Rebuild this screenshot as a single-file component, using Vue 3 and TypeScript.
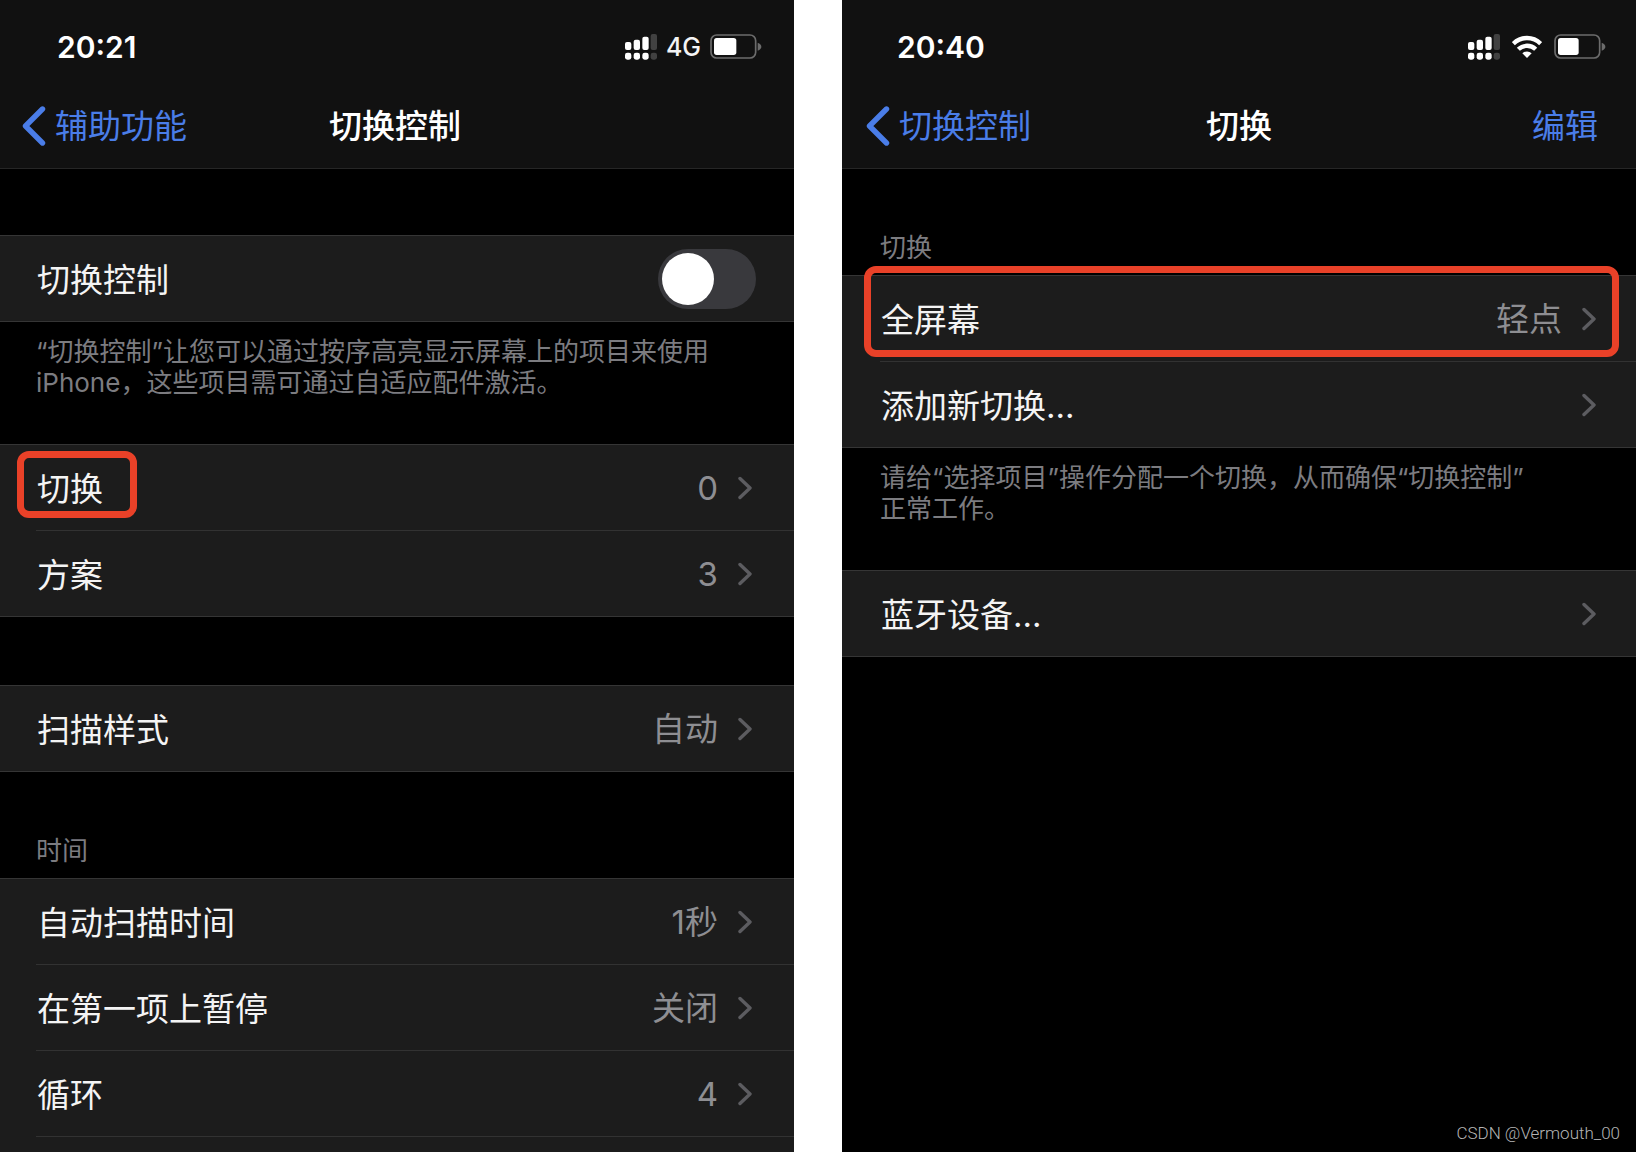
<script setup lang="ts">
import { ref } from 'vue'

interface Row {
  label: string
  value?: string
  toggle?: boolean
  mark?: 'label' | 'row'
}

interface Group {
  heading?: string
  rows: Row[]
  note?: string
  continues?: boolean
}

interface Screen {
  id: string
  time: string
  network: '4G' | 'wifi'
  charge: number
  back: string
  title: string
  action?: string
  groups: Group[]
}

const switchControl = ref(false)

const screens: Screen[] = [
  {
    id: 'control',
    time: '20:21',
    network: '4G',
    charge: 67,
    back: '辅助功能',
    title: '切换控制',
    groups: [
      {
        rows: [{ label: '切换控制', toggle: true }],
        note: '“切换控制”让您可以通过按序高亮显示屏幕上的项目来使用\niPhone，这些项目需可通过自适应配件激活。',
      },
      {
        rows: [
          { label: '切换', value: '0', mark: 'label' },
          { label: '方案', value: '3' },
        ],
      },
      { rows: [{ label: '扫描样式', value: '自动' }] },
      {
        heading: '时间',
        continues: true,
        rows: [
          { label: '自动扫描时间', value: '1秒' },
          { label: '在第一项上暂停', value: '关闭' },
          { label: '循环', value: '4' },
        ],
      },
    ],
  },
  {
    id: 'switches',
    time: '20:40',
    network: 'wifi',
    charge: 62,
    back: '切换控制',
    title: '切换',
    action: '编辑',
    groups: [
      {
        heading: '切换',
        rows: [{ label: '全屏幕', value: '轻点', mark: 'row' }, { label: '添加新切换…' }],
        note: '请给“选择项目”操作分配一个切换，从而确保“切换控制”\n正常工作。',
      },
      { rows: [{ label: '蓝牙设备…' }] },
    ],
  },
]
</script>

<template>
  <main class="page">
    <section v-for="s in screens" :key="s.id" class="phone" :class="s.id">
      <header class="header">
        <div class="status">
          <span class="time">{{ s.time }}</span>
          <div class="indicators">
            <svg class="signal" viewBox="0 0 96 78" aria-hidden="true">
              <g fill="#fff">
                <rect x="0" y="24" width="19" height="24" rx="6" />
                <rect x="26" y="17" width="19" height="31" rx="6" />
                <rect x="52" y="8" width="19" height="40" rx="6" />
                <rect x="0" y="56" width="19" height="21" rx="7" />
                <rect x="26" y="56" width="19" height="21" rx="7" />
                <rect x="52" y="56" width="19" height="21" rx="7" />
              </g>
              <g fill="#414141">
                <rect x="77" y="0" width="19" height="48" rx="6" />
                <rect x="77" y="56" width="19" height="21" rx="7" />
              </g>
            </svg>
            <span v-if="s.network === '4G'" class="network">4G</span>
            <svg v-else class="wifi" viewBox="0 0 90 69" aria-label="Wi-Fi">
              <g fill="none" stroke="#fff" stroke-width="13">
                <path d="M4 26A58 58 0 0 1 86 26" />
                <path d="M19 43A37 37 0 0 1 71 43" />
              </g>
              <path d="M45 69L31 55A20 20 0 0 1 59 55Z" fill="#fff" />
            </svg>
            <svg class="battery" viewBox="0 0 156 75" aria-hidden="true">
              <rect x="3" y="3" width="134" height="69" rx="17" fill="none" stroke="#6c6c6c" stroke-width="5" />
              <rect x="12" y="12" :width="s.charge" height="51" rx="8" fill="#fff" />
              <path d="M143 26Q154 30 154 38T143 50Z" fill="#6c6c6c" />
            </svg>
          </div>
        </div>
        <nav class="nav">
          <a class="back" href="#">
            <svg viewBox="0 0 24 40" aria-hidden="true">
              <path d="M20.5 3L3.5 20L20.5 37" fill="none" stroke="currentColor" stroke-width="5.4" stroke-linecap="round" stroke-linejoin="round" />
            </svg>
            <span>{{ s.back }}</span>
          </a>
          <h1 class="title">{{ s.title }}</h1>
          <button v-if="s.action" type="button" class="action">{{ s.action }}</button>
        </nav>
      </header>

      <section v-for="(g, gi) in s.groups" :key="gi" class="group" :class="{ continues: g.continues }">
        <h2 v-if="g.heading" class="heading">{{ g.heading }}</h2>
        <ul class="list">
          <li v-for="r in g.rows" :key="r.label" class="item">
            <label v-if="r.toggle" class="row">
              <span class="label">{{ r.label }}</span>
              <input v-model="switchControl" type="checkbox" class="toggle" />
            </label>
            <a v-else class="row" href="#">
              <span class="label">{{ r.label }}</span>
              <span class="detail">
                <span v-if="r.value">{{ r.value }}</span>
                <svg class="chevron" viewBox="0 0 14 24" aria-hidden="true">
                  <path d="M2 2.5L12 12L2 21.5" fill="none" stroke="currentColor" stroke-width="3.4" stroke-linecap="round" stroke-linejoin="round" />
                </svg>
              </span>
            </a>
            <span v-if="r.mark" class="mark" :class="'mark-' + r.mark"></span>
          </li>
        </ul>
        <p v-if="g.note" class="note">{{ g.note }}</p>
      </section>
    </section>
    <span class="watermark">CSDN @Vermouth_00</span>
  </main>
</template>

<style>
body {
  margin: 0;
  background: #fff;
}
</style>

<style scoped>
.page {
  position: relative;
  display: grid;
  grid-template-columns: repeat(2, minmax(0, 1fr));
  gap: 48px;
  min-height: 100vh;
  font-family: Inter, "Noto Sans CJK SC", sans-serif;
  font-size: 33px;
  line-height: 48px;
  color: #f4f4f4;
}
.phone {
  --start: 38px;
  --end: 40px;
  display: flex;
  flex-direction: column;
  min-width: 0;
  background: #000;
}
.control {
  --start: 36px;
  --end: 42px;
}
.header {
  background: #111;
  border-bottom: 1px solid #262626;
}
.status {
  box-sizing: border-box;
  height: 84px;
  padding: 9px 30px 0 55px;
  display: flex;
  align-items: center;
  justify-content: space-between;
}
.control .status {
  padding: 9px 32px 0 57px;
}
.time {
  font-size: 30px;
  font-weight: 600;
  color: #fff;
}
.indicators {
  display: flex;
  align-items: center;
  gap: 12px;
}
.control .indicators {
  gap: 9px;
}
.signal {
  width: 32px;
  height: 26px;
}
.network {
  font-size: 25px;
  font-weight: 500;
}
.wifi {
  width: 30px;
  height: 23px;
}
.battery {
  width: 52px;
  height: 25px;
}
.nav {
  height: 84px;
  padding: 0 24px;
  display: grid;
  grid-template-columns: minmax(0, 1fr) auto minmax(0, 1fr);
  align-items: center;
}
.control .nav {
  padding: 0 26px 0 22px;
}
.back {
  display: flex;
  align-items: center;
  gap: 9px;
  color: #4a7de8;
  text-decoration: none;
}
.back svg {
  width: 24px;
  height: 40px;
}
.title {
  margin: 0;
  font-size: 33px;
  font-weight: 500;
  color: #fff;
}
.action {
  justify-self: end;
  margin: 0 14px 0 0;
  padding: 0;
  border: 0;
  background: none;
  font: inherit;
  color: #4a7de8;
}
.group {
  padding-top: 68px;
}
.header + .group {
  padding-top: 66px;
}
.group:has(.heading),
.header + .group:has(.heading),
.group:has(.note) + .group {
  padding-top: 0;
}
.heading {
  margin: 0;
  padding: 63px var(--end) 12px var(--start);
  font-size: 26px;
  line-height: 31px;
  font-weight: 400;
  color: #7c7c80;
}
.list {
  margin: 0;
  padding: 0;
  list-style: none;
  background: #1c1c1c;
  border-top: 1px solid #353535;
}
.item {
  position: relative;
  padding-left: var(--start);
}
.item:last-child {
  border-bottom: 1px solid #353535;
}
.row {
  height: 85px;
  padding-right: var(--end);
  display: flex;
  align-items: center;
  justify-content: space-between;
  color: inherit;
  text-decoration: none;
}
.label {
  padding: 2px 0 0 1px;
}
.item:not(:last-child) .row,
.continues .row {
  border-bottom: 1px solid #323232;
}
.continues {
  flex: 1;
  display: flex;
  flex-direction: column;
}
.continues .list {
  flex: 1;
}
.continues .item:last-child {
  border-bottom: 0;
}
.detail {
  display: flex;
  align-items: center;
  gap: 20px;
  color: #8e8e92;
}
.chevron {
  width: 14px;
  height: 24px;
  color: #5c5c60;
}
.toggle {
  appearance: none;
  box-sizing: border-box;
  width: 98px;
  height: 60px;
  margin: 0 -4px 0 0;
  padding: 4px;
  border-radius: 30px;
  background: #39393d;
}
.toggle::before {
  content: "";
  display: block;
  width: 52px;
  height: 52px;
  border-radius: 50%;
  background: #fff;
}
.toggle:checked {
  background: #30d158;
}
.toggle:checked::before {
  margin-left: auto;
}
.note {
  margin: 0;
  padding: 14px 0 46px var(--start);
  font-size: 26px;
  line-height: 31px;
  white-space: pre-line;
  color: #7c7c80;
}
.mark {
  position: absolute;
  box-sizing: border-box;
  border: 7px solid #e94128;
  border-radius: 12px;
  pointer-events: none;
}
.mark-label {
  top: 6px;
  left: 17px;
  width: 120px;
  height: 67px;
}
.mark-row {
  top: -10px;
  left: 22px;
  right: 17px;
  height: 91px;
}
.watermark {
  position: absolute;
  right: 16px;
  bottom: 8px;
  font-family: Roboto, sans-serif;
  font-size: 17px;
  font-weight: 300;
  line-height: 22px;
  color: #b4b4b4;
}
</style>
